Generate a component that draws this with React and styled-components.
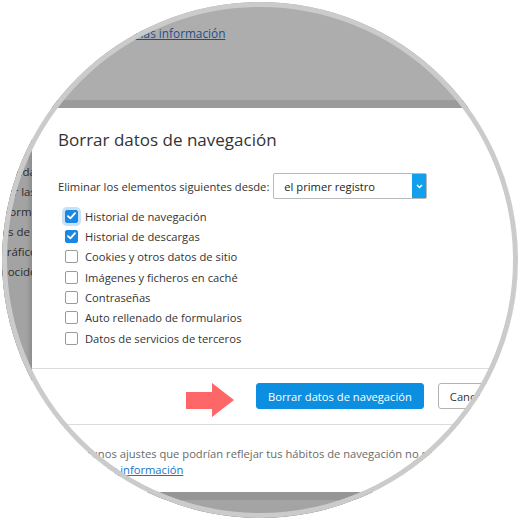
import styled, { createGlobalStyle } from 'styled-components'

const GlobalStyle = createGlobalStyle`
  html, body {
    margin: 0;
    background: #fff;
  }
  body {
    font-family: "Open Sans", "Noto Sans", sans-serif;
    -webkit-font-smoothing: antialiased;
  }
`

const Stage = styled.div`
  width: 520px;
  height: 520px;
  padding: 2px;
  box-sizing: border-box;
`

const Lens = styled.div`
  position: relative;
  width: 516px;
  height: 516px;
  border-radius: 50%;
  overflow: hidden;
  background: #adadae;
  display: flex;
  flex-direction: column;

  &::after {
    content: '';
    position: absolute;
    inset: 0;
    border-radius: 50%;
    border: 5px solid #cbcbcb;
    pointer-events: none;
  }
`

const Backdrop = styled.div`
  height: 98px;
  flex: none;
  box-sizing: border-box;
  padding: 23px 0 0 131px;
  font-size: 11.8px;
  line-height: 16px;
`

const DimLink = styled.a`
  color: #1d4f8c;
  text-decoration: underline;
`

const ShadowBand = styled.div`
  height: 8px;
  flex: none;
  background: #9b9b9b;
`

const Middle = styled.div`
  display: flex;
  flex: none;
`

const PageStrip = styled.div`
  width: 30px;
  flex: none;
  overflow: hidden;
  background: #a3a3a3;
  box-shadow: inset -3px 0 3px rgba(0, 0, 0, 0.12);
  padding-top: 54px;
  box-sizing: border-box;
`

const StripLine = styled.div`
  width: ${p => p.$w}px;
  display: flex;
  justify-content: flex-end;
  white-space: pre;
  font-size: 11.5px;
  line-height: 20px;
  color: #2b2b2b;
`

const Dialog = styled.div`
  flex: 1;
  min-width: 0;
  background: #fff;
  color: #333;
  font-size: 11.2px;
`

const Head = styled.div`
  padding: 20px 0 20px 26px;
`

const Title = styled.h2`
  margin: 0;
  font-size: 17px;
  font-weight: 400;
  line-height: 24px;
  color: #333;
`

const SourceRow = styled.div`
  margin-top: 21px;
  height: 26px;
  display: flex;
  align-items: center;
  gap: 4px;
  white-space: nowrap;
`

const Select = styled.div`
  width: 154px;
  height: 26px;
  box-sizing: border-box;
  border: 1px solid #b9b9b9;
  border-radius: 2px;
  display: flex;
  align-items: stretch;
  color: #222;
`

const SelectValue = styled.span`
  flex: 1;
  padding-left: 10px;
  display: flex;
  align-items: center;
`

const SelectArrow = styled.span`
  width: 14px;
  background: #12a0ec;
  display: flex;
  align-items: center;
  justify-content: center;
`

const Options = styled.div`
  margin-top: 7px;
  padding-left: 7px;
  display: flex;
  flex-direction: column;
`

const Option = styled.label`
  height: 20.33px;
  display: flex;
  align-items: center;
  gap: 7px;
  white-space: nowrap;
`

const Box = styled.span`
  width: 13px;
  height: 13px;
  box-sizing: border-box;
  border-radius: 2px;
  border: 1px solid ${p => (p.$checked ? '#1c87e0' : '#9a9a9a')};
  background: ${p => (p.$checked ? '#1c87e0' : '#fff')};
  box-shadow: ${p => (p.$focus ? '0 0 0 3px #c8e1f7' : 'none')};
  display: flex;
  align-items: center;
  justify-content: center;
  flex: none;
`

const Actions = styled.div`
  height: 56px;
  box-sizing: border-box;
  border-top: 1px solid #dcdcdc;
  padding: 14px 0 0 154px;
  display: flex;
  align-items: flex-start;
  white-space: nowrap;
`

const Pointer = styled.svg`
  flex: none;
  margin-right: 22px;
`

const Button = styled.button`
  height: 26px;
  box-sizing: border-box;
  padding: 0 11px;
  border-radius: 3px;
  font-family: inherit;
  font-size: 11.2px;
  flex: none;
  border: 1px solid ${p => (p.$primary ? '#0c8fe0' : '#b3b3b3')};
  background: ${p => (p.$primary ? '#0c8fe0' : '#fff')};
  color: ${p => (p.$primary ? '#fff' : '#333')};
  margin-left: ${p => (p.$primary ? 0 : 14)}px;
`

const Footer = styled.div`
  border-top: 1px solid #dcdcdc;
  padding: 21px 0 14px 43px;
  line-height: 16px;
  color: #6a6a6a;
  white-space: nowrap;
`

const FooterLink = styled.a`
  color: #1a73c8;
  text-decoration: underline;
`

const Below = styled.div`
  flex: 1;
  border-top: 8px solid #959595;
  background: #a4a4a4;
`

const stripLines = [
  { text: 'ayuda', w: 34 },
  { text: 'por las', w: 34 },
  { text: 'informe', w: 36 },
  { text: 'ajustes de ', w: 31 },
  { text: 'tráfico', w: 35 },
  { text: 'desconocido', w: 35 },
]

const options = [
  { label: 'Historial de navegación', checked: true, focus: true },
  { label: 'Historial de descargas', checked: true },
  { label: 'Cookies y otros datos de sitio' },
  { label: 'Imágenes y ficheros en caché' },
  { label: 'Contraseñas' },
  { label: 'Auto rellenado de formularios' },
  { label: 'Datos de servicios de terceros' },
]

function Check() {
  return (
    <svg width="9" height="8" viewBox="0 0 9 8">
      <path d="M1 4.2 L3.4 6.4 L8 1.2" fill="none" stroke="#fff" strokeWidth="1.8" strokeLinecap="round" strokeLinejoin="round" />
    </svg>
  )
}

export default function App() {
  return (
    <>
      <GlobalStyle />
      <Stage>
        <Lens>
          <Backdrop>
            <DimLink>Más información</DimLink>
          </Backdrop>
          <ShadowBand />
          <Middle>
            <PageStrip>
              {stripLines.map(l => (
                <StripLine key={l.text} $w={l.w}>{l.text}</StripLine>
              ))}
            </PageStrip>
            <Dialog>
              <Head>
                <Title>Borrar datos de navegación</Title>
                <SourceRow>
                  <span>Eliminar los elementos siguientes desde:</span>
                  <Select>
                    <SelectValue>el primer registro</SelectValue>
                    <SelectArrow>
                      <svg width="7" height="5" viewBox="0 0 7 5">
                        <path d="M1 1 L3.5 3.5 L6 1" fill="none" stroke="#fff" strokeWidth="1.5" />
                      </svg>
                    </SelectArrow>
                  </Select>
                </SourceRow>
                <Options>
                  {options.map(o => (
                    <Option key={o.label}>
                      <Box $checked={o.checked} $focus={o.focus}>
                        {o.checked && <Check />}
                      </Box>
                      {o.label}
                    </Option>
                  ))}
                </Options>
              </Head>
              <Actions>
                <Pointer width="48" height="34" viewBox="0 0 48 34">
                  <polygon points="0,9 26,9 26,0 48,17 26,34 26,26 0,26" fill="#fe6767" />
                </Pointer>
                <Button $primary>Borrar datos de navegación</Button>
                <Button>Cancelar</Button>
              </Actions>
              <Footer>
                <div>Algunos ajustes que podrían reflejar tus hábitos de navegación no se borrarán.</div>
                <div>
                  <FooterLink>Ver más información</FooterLink>
                </div>
              </Footer>
            </Dialog>
          </Middle>
          <Below />
        </Lens>
      </Stage>
    </>
  )
}
